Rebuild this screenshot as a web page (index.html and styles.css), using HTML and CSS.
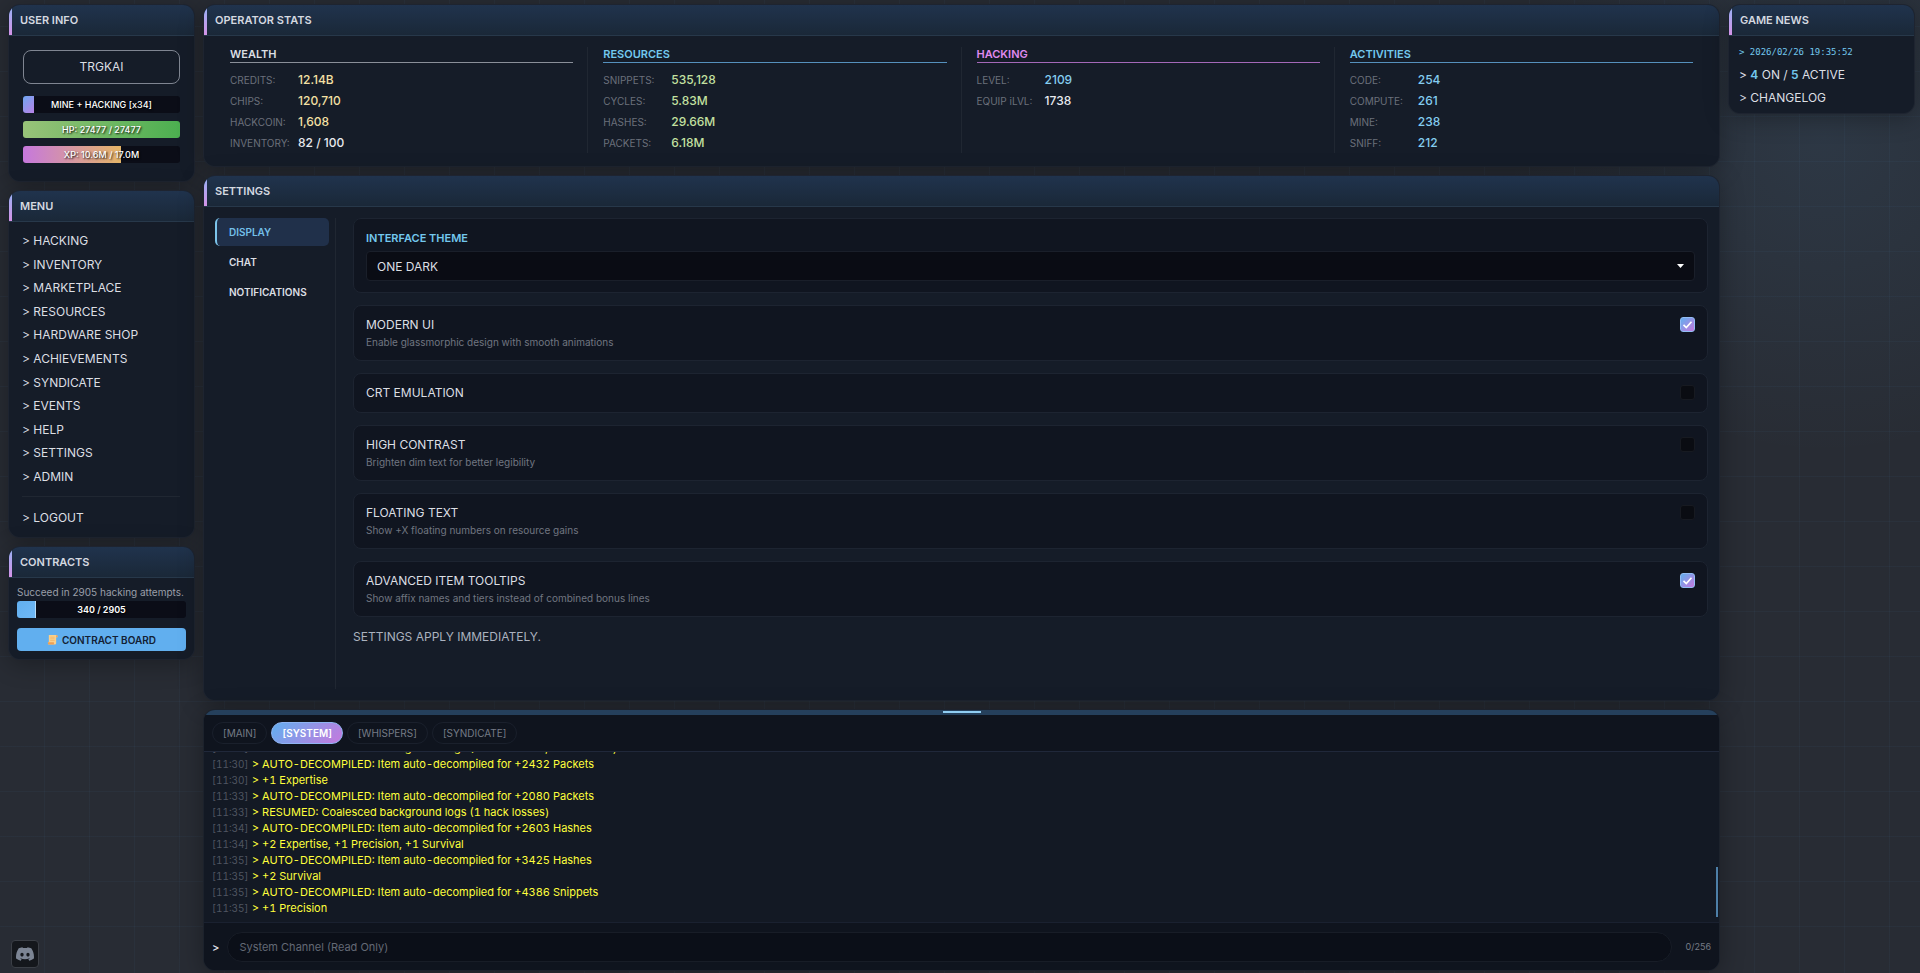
FILE: index.html
```html
<!DOCTYPE html>
<html lang="en">
<head>
<meta charset="utf-8">
<title>Operator Settings</title>
<link rel="stylesheet" href="styles.css">
</head>
<body>
<div class="layout">
  <aside class="side">
    <section class="panel">
      <h2 class="panel-title">USER INFO</h2>
      <div class="user">
        <a class="user-name" href="#profile">TRGKAI</a>
        <div class="bar"><div class="bar-fill fill-task" style="width:7%"></div><span class="bar-text">MINE + HACKING [x34]</span></div>
        <div class="bar"><div class="bar-fill fill-hp" style="width:100%"></div><span class="bar-text">HP: 27477 / 27477</span></div>
        <div class="bar"><div class="bar-fill fill-xp" style="width:62.4%"></div><span class="bar-text">XP: 10.6M / 17.0M</span></div>
      </div>
    </section>
    <section class="panel">
      <h2 class="panel-title">MENU</h2>
      <nav class="menu">
        <div class="menu-list">
          <a href="#hacking">&gt; HACKING</a>
          <a href="#inventory">&gt; INVENTORY</a>
          <a href="#marketplace">&gt; MARKETPLACE</a>
          <a href="#resources">&gt; RESOURCES</a>
          <a href="#hardware">&gt; HARDWARE SHOP</a>
          <a href="#achievements">&gt; ACHIEVEMENTS</a>
          <a href="#syndicate">&gt; SYNDICATE</a>
          <a href="#events">&gt; EVENTS</a>
          <a href="#help">&gt; HELP</a>
          <a href="#settings">&gt; SETTINGS</a>
          <a href="#admin">&gt; ADMIN</a>
        </div>
        <hr class="menu-rule">
        <a href="#logout">&gt; LOGOUT</a>
      </nav>
    </section>
    <section class="panel">
      <h2 class="panel-title">CONTRACTS</h2>
      <div class="contract">
        <p class="contract-text">Succeed in 2905 hacking attempts.</p>
        <div class="bar"><div class="bar-fill fill-contract" style="width:11.2%"></div><span class="bar-text">340 / 2905</span></div>
        <button class="contract-button" type="button">
          <svg class="scroll-icon" viewBox="0 0 12 12" aria-hidden="true"><path d="M2 1h8c1 0 1.500.6 1.500 1.500v1H10v6.300c0 1-.6 1.700-1.500 1.700H2.500C1.500 11.500 1 10.800 1 10V9h1z" fill="#fbd08a"/><path d="M3.500 3.500h4.800M3.500 5.300h4.800M3.500 7.100h4.800" stroke="#f0b468" stroke-width=".8"/><path d="M1 9h6.500v1.200c0 .8.400 1.300 1 1.300h-6C1.500 11.500 1 10.800 1 10zM10 3.500V2.300C10 1.500 10.300 1 10.700 1c.6.200.8.700.8 1.500v1z" fill="#ee9f54"/></svg>
          CONTRACT BOARD
        </button>
      </div>
    </section>
  </aside>

  <main class="center">
    <section class="panel">
      <h2 class="panel-title">OPERATOR STATS</h2>
      <div class="stats">
        <div class="stat-group">
          <h3 class="stat-title">WEALTH</h3>
          <dl class="stat-list gold">
            <dt>CREDITS:</dt><dd>12.14B</dd>
            <dt>CHIPS:</dt><dd>120,710</dd>
            <dt>HACKCOIN:</dt><dd>1,608</dd>
            <dt>INVENTORY:</dt><dd class="plain">82 / 100</dd>
          </dl>
        </div>
        <div class="stat-group">
          <h3 class="stat-title title-cyan">RESOURCES</h3>
          <dl class="stat-list green">
            <dt>SNIPPETS:</dt><dd>535,128</dd>
            <dt>CYCLES:</dt><dd>5.83M</dd>
            <dt>HASHES:</dt><dd>29.66M</dd>
            <dt>PACKETS:</dt><dd>6.18M</dd>
          </dl>
        </div>
        <div class="stat-group">
          <h3 class="stat-title title-pink">HACKING</h3>
          <dl class="stat-list cyan">
            <dt>LEVEL:</dt><dd>2109</dd>
            <dt>EQUIP iLVL:</dt><dd class="plain">1738</dd>
          </dl>
        </div>
        <div class="stat-group">
          <h3 class="stat-title title-cyan">ACTIVITIES</h3>
          <dl class="stat-list cyan">
            <dt>CODE:</dt><dd>254</dd>
            <dt>COMPUTE:</dt><dd>261</dd>
            <dt>MINE:</dt><dd>238</dd>
            <dt>SNIFF:</dt><dd>212</dd>
          </dl>
        </div>
      </div>
    </section>

    <section class="panel settings-panel">
      <h2 class="panel-title">SETTINGS</h2>
      <div class="settings">
        <div class="tabs">
          <button class="tab active" type="button">DISPLAY</button>
          <button class="tab" type="button">CHAT</button>
          <button class="tab" type="button">NOTIFICATIONS</button>
        </div>
        <form class="options">
          <div class="option theme">
            <label class="theme-label" for="theme">INTERFACE THEME</label>
            <select class="theme-select" id="theme"><option>ONE DARK</option></select>
          </div>
          <div class="option">
            <label class="option-label" for="modern"><span class="option-name">MODERN UI</span><span class="option-note">Enable glassmorphic design with smooth animations</span></label>
            <input class="check" id="modern" type="checkbox" checked>
          </div>
          <div class="option">
            <label class="option-label" for="crt"><span class="option-name">CRT EMULATION</span></label>
            <input class="check" id="crt" type="checkbox">
          </div>
          <div class="option">
            <label class="option-label" for="contrast"><span class="option-name">HIGH CONTRAST</span><span class="option-note">Brighten dim text for better legibility</span></label>
            <input class="check" id="contrast" type="checkbox">
          </div>
          <div class="option">
            <label class="option-label" for="floating"><span class="option-name">FLOATING TEXT</span><span class="option-note">Show +X floating numbers on resource gains</span></label>
            <input class="check" id="floating" type="checkbox">
          </div>
          <div class="option">
            <label class="option-label" for="tooltips"><span class="option-name">ADVANCED ITEM TOOLTIPS</span><span class="option-note">Show affix names and tiers instead of combined bonus lines</span></label>
            <input class="check" id="tooltips" type="checkbox" checked>
          </div>
          <p class="apply-note">SETTINGS APPLY IMMEDIATELY.</p>
        </form>
      </div>
    </section>

    <section class="panel chat">
      <div class="resizer"><span class="grip"></span></div>
      <div class="channels">
        <button class="channel" type="button">[MAIN]</button>
        <button class="channel selected" type="button">[SYSTEM]</button>
        <button class="channel" type="button">[WHISPERS]</button>
        <button class="channel" type="button">[SYNDICATE]</button>
      </div>
      <div class="log">
        <p><time>[11:30]</time>&gt; RESUMED: Coalesced background logs (1 hack losses, 1 hack wins)</p>
        <p><time>[11:30]</time>&gt; AUTO-DECOMPILED: Item auto-decompiled for +2432 Packets</p>
        <p><time>[11:30]</time>&gt; +1 Expertise</p>
        <p><time>[11:33]</time>&gt; AUTO-DECOMPILED: Item auto-decompiled for +2080 Packets</p>
        <p><time>[11:33]</time>&gt; RESUMED: Coalesced background logs (1 hack losses)</p>
        <p><time>[11:34]</time>&gt; AUTO-DECOMPILED: Item auto-decompiled for +2603 Hashes</p>
        <p><time>[11:34]</time>&gt; +2 Expertise, +1 Precision, +1 Survival</p>
        <p><time>[11:35]</time>&gt; AUTO-DECOMPILED: Item auto-decompiled for +3425 Hashes</p>
        <p><time>[11:35]</time>&gt; +2 Survival</p>
        <p><time>[11:35]</time>&gt; AUTO-DECOMPILED: Item auto-decompiled for +4386 Snippets</p>
        <p><time>[11:35]</time>&gt; +1 Precision</p>
        <span class="scroll-thumb"></span>
      </div>
      <div class="compose">
        <label class="prompt" for="message">&gt;</label>
        <input class="message" id="message" type="text" placeholder="System Channel (Read Only)" readonly>
        <span class="count">0/256</span>
      </div>
    </section>
  </main>

  <aside class="side">
    <section class="panel">
      <h2 class="panel-title">GAME NEWS</h2>
      <div class="news">
        <p class="clock">&gt; 2026/02/26 19:35:52</p>
        <p>&gt; <b>4</b> ON / <b>5</b> ACTIVE</p>
        <a href="#changelog">&gt; CHANGELOG</a>
      </div>
    </section>
  </aside>
</div>
<a class="discord" href="#discord" aria-label="Discord">
  <svg viewBox="0 0 24 24" aria-hidden="true"><path fill="currentColor" d="M20.317 4.37a19.79 19.79 0 0 0-4.885-1.515.074.074 0 0 0-.079.037c-.21.375-.444.864-.608 1.25a18.27 18.27 0 0 0-5.487 0 12.64 12.64 0 0 0-.617-1.25.077.077 0 0 0-.079-.037A19.736 19.736 0 0 0 3.677 4.37a.07.07 0 0 0-.032.027C.533 9.046-.32 13.58.099 18.057a.082.082 0 0 0 .031.057 19.9 19.9 0 0 0 5.993 3.03.078.078 0 0 0 .084-.028 14.09 14.09 0 0 0 1.226-1.994.076.076 0 0 0-.041-.106 13.107 13.107 0 0 1-1.872-.892.077.077 0 0 1-.008-.128 10.2 10.2 0 0 0 .372-.292.074.074 0 0 1 .077-.01c3.928 1.793 8.18 1.793 12.062 0a.074.074 0 0 1 .078.01c.12.098.246.198.373.292a.077.077 0 0 1-.006.127 12.299 12.299 0 0 1-1.873.892.077.077 0 0 0-.041.107c.36.698.772 1.362 1.225 1.993a.076.076 0 0 0 .084.028 19.839 19.839 0 0 0 6.002-3.03.077.077 0 0 0 .032-.054c.5-5.177-.838-9.674-3.549-13.66a.061.061 0 0 0-.031-.03zM8.02 15.33c-1.183 0-2.157-1.085-2.157-2.419 0-1.333.956-2.419 2.157-2.419 1.21 0 2.176 1.096 2.157 2.42 0 1.333-.956 2.418-2.157 2.418zm7.975 0c-1.183 0-2.157-1.085-2.157-2.419 0-1.333.955-2.419 2.157-2.419 1.21 0 2.176 1.096 2.157 2.42 0 1.333-.946 2.418-2.157 2.418z"/></svg>
</a>
</body>
</html>
```

FILE: styles.css
```css
:root {
  --text: #dcdfe4;
  --line: rgba(255, 255, 255, 0.05);
  --blue: #61afef;
  --cyan: #73c8ee;
}

* { box-sizing: border-box; }

body {
  margin: 0;
  height: 100vh;
  overflow: hidden;
  color: var(--text);
  font: 12px/20px Inter, sans-serif;
  background:
    radial-gradient(circle at 95% 14%, rgba(97, 175, 239, 0.09), transparent 320px),
    repeating-linear-gradient(0deg, transparent 0 44px, rgba(97, 175, 239, 0.04) 44px 45px) 0 -2px,
    repeating-linear-gradient(90deg, transparent 0 44px, rgba(97, 175, 239, 0.04) 44px 45px),
    #282c34;
}

h2, h3, p, dl, dd { margin: 0; }
a { color: inherit; text-decoration: none; }
button, input, select { font-family: inherit; color: inherit; }

.layout {
  display: grid;
  grid-template-columns: 187px minmax(0, 1fr) 187px;
  gap: 8px;
  height: 100vh;
  padding: 4px 5px 2px 8px;
}

.side, .center {
  display: flex;
  flex-direction: column;
  gap: 8px;
  min-height: 0;
}

.panel {
  position: relative;
  flex-shrink: 0;
  overflow: hidden;
  border: 1px solid rgba(255, 255, 255, 0.04);
  border-radius: 12px;
  background: #151c28;
  box-shadow: 0 4px 24px rgba(0, 0, 0, 0.3);
}

.panel-title {
  padding: 5px 11px 5px 8px;
  border-left: 3px solid;
  border-image: linear-gradient(#93b4f5, #d692e6) 1;
  border-bottom: 0;
  box-shadow: 0 1px 0 #27384a;
  background: linear-gradient(#20334d, #1a2838);
  color: #d5d9e0;
  font-size: 11px;
  font-weight: 600;
  line-height: 20px;
}

/* user info */
.user {
  display: flex;
  flex-direction: column;
  gap: 8px;
  padding: 15px 14px 18px;
}
.user-name {
  margin-bottom: 4px;
  padding: 7px;
  border: 1px solid #7f8591;
  border-radius: 8px;
  line-height: 18px;
  text-align: center;
}
.bar {
  position: relative;
  height: 17px;
  overflow: hidden;
  border-radius: 3px;
  background: #0b0d17;
}
.bar-fill { height: 100%; }
.fill-task { background: linear-gradient(135deg, #6fa8f2, #b982e6); }
.fill-hp { background: linear-gradient(90deg, #98c379, #4caf50); }
.fill-xp { background: linear-gradient(90deg, #c678dd, #e5b567); }
.fill-contract { background: linear-gradient(135deg, #61afef, #6fb8f5); border-right: 1px solid #b5dcfa; }
.bar-text {
  position: absolute;
  inset: 0;
  color: #fff;
  font-size: 9px;
  font-weight: 500;
  line-height: 17px;
  text-align: center;
  text-shadow: 1px 1px 2px #000;
}
.contract .bar-text { font-weight: 600; }

/* menu */
.menu {
  display: flex;
  flex-direction: column;
  padding: 10px 14px 9px 13px;
}
.menu-list {
  display: flex;
  flex-direction: column;
  justify-content: space-between;
  height: 256px;
}
.menu-rule {
  width: 100%;
  margin: 9px 0 11px;
  border: 0;
  border-top: 1px solid var(--line);
}

/* contracts */
.contract { padding: 6px 8px 8px; }
.contract-text { color: #9a9fa8; font-size: 10px; line-height: 18px; }
.contract-button {
  display: flex;
  align-items: center;
  justify-content: center;
  gap: 4px;
  width: 100%;
  height: 23px;
  margin-top: 10px;
  padding: 0;
  border: 0;
  border-radius: 4px;
  background: var(--blue);
  color: #122033;
  font-size: 10px;
  font-weight: 600;
}
.scroll-icon { width: 11px; height: 11px; }

/* operator stats */
.stats {
  display: grid;
  grid-template-columns: repeat(4, 1fr);
  padding: 12px 11px 13px;
}
.stat-group {
  padding: 0 14px 0 15px;
  border-right: 1px solid var(--line);
}
.stat-group:last-child { border-right: 0; padding-right: 15px; }
.stat-title {
  border-bottom: 1px solid #8a8f99;
  font-size: 11px;
  font-weight: 600;
  line-height: 15px;
}
.title-cyan { color: var(--cyan); border-color: #5590bd; }
.title-pink { color: #e08af0; border-color: #a468b8; }
.stat-list {
  display: grid;
  grid-template-columns: 68px 1fr;
  grid-auto-rows: 21px;
  align-items: center;
  padding-top: 6px;
}
.stat-list dt { color: #6b707b; font-size: 10px; }
.stat-list dd { font-size: 12px; font-weight: 500; }
.gold { color: #f4e0a4; }
.green { color: #c3e0a0; }
.cyan { color: #84cdf0; }
.stat-list .plain { color: #e8eaee; }

/* settings */
.settings-panel {
  display: flex;
  flex: 1 1 auto;
  flex-direction: column;
  min-height: 0;
}
.settings {
  display: grid;
  flex: 1;
  grid-template-columns: 121px minmax(0, 1fr);
  gap: 17px;
  min-height: 0;
  padding: 12px 11px 11px;
}
.tabs {
  display: flex;
  flex-direction: column;
  gap: 2px;
  padding-right: 6px;
  border-right: 1px solid var(--line);
}
.tab {
  height: 28px;
  padding: 0 12px;
  border: 0;
  border-left: 2px solid transparent;
  border-radius: 5px;
  background: none;
  font-size: 10px;
  font-weight: 600;
  text-align: left;
}
.tab.active {
  border-left-color: #7cc4ea;
  background: #20304a;
  color: #73bfe8;
}
.options {
  display: flex;
  flex-direction: column;
  gap: 12px;
}
.option {
  display: flex;
  align-items: flex-start;
  justify-content: space-between;
  padding: 11px 12px;
  border: 1px solid #1d2431;
  border-radius: 8px;
  background: #101520;
}
.theme { flex-direction: column; }
.theme-label {
  padding-bottom: 5px;
  color: var(--cyan);
  font-size: 11px;
  font-weight: 600;
  line-height: 16px;
}
.theme-select {
  width: 100%;
  height: 30px;
  padding: 0 10px;
  appearance: none;
  border: 1px solid #1a1f2a;
  border-radius: 4px;
  background: #0a0c14 url("data:image/svg+xml,%3Csvg xmlns='http://www.w3.org/2000/svg' viewBox='0 0 7 4'%3E%3Cpath d='M0 0h7L3.500 4z' fill='%23fff'/%3E%3C/svg%3E") no-repeat right 10px center / 7px 4px;
  font-size: 12px;
}
.option-label { display: grid; }
.option-name { font-size: 12px; line-height: 16px; }
.option-note { padding-top: 2px; color: #707580; font-size: 10px; line-height: 14px; }
.check {
  width: 15px;
  height: 15px;
  margin: 0;
  appearance: none;
  border: 1px solid #171a21;
  border-radius: 3px;
  background: #0a0c12;
}
.check:checked {
  border-color: #93bdf5;
  background:
    url("data:image/svg+xml,%3Csvg xmlns='http://www.w3.org/2000/svg' viewBox='0 0 13 13'%3E%3Cpath d='M2.500 6.800l2.800 2.700 5.200-5.800' fill='none' stroke='%23fff' stroke-width='1.600'/%3E%3C/svg%3E") center / 13px 13px,
    linear-gradient(135deg, #61afef, #c678dd);
}
.apply-note { color: #abb2bf; font-size: 12px; line-height: 16px; }

/* chat */
.chat {
  display: flex;
  flex-direction: column;
  height: 262px;
  background: #131924;
}
.resizer {
  display: flex;
  justify-content: center;
  height: 5px;
  flex-shrink: 0;
  padding-top: 1px;
  background: #25405c;
}
.grip { width: 38px; height: 2px; background: #8fcdf2; }
.channels {
  display: flex;
  flex-shrink: 0;
  gap: 4px;
  padding: 7px 8px;
  border-bottom: 1px solid #20283a;
  background: #0f141e;
}
.channel {
  height: 22px;
  padding: 0 10px;
  border: 1px solid #1a202c;
  border-radius: 11px;
  background: none;
  color: #757b86;
  font-size: 10px;
}
.channel.selected {
  border-color: #8fb4f2;
  background: linear-gradient(135deg, #61afef, #c678dd);
  color: #fff;
  font-weight: 600;
}
.log {
  position: relative;
  display: flex;
  flex: 1;
  flex-direction: column;
  justify-content: flex-end;
  min-height: 0;
  overflow: hidden;
  padding: 0 8px 6px;
  color: #ffff3c;
  font-size: 11px;
  font-variant-numeric: tabular-nums;
  line-height: 16px;
}
.log p { flex-shrink: 0; }
.log time {
  display: inline-block;
  width: 40px;
  color: #4f5561;
  font-size: 10px;
}
.scroll-thumb {
  position: absolute;
  right: 1px;
  bottom: 5px;
  width: 2px;
  height: 50px;
  background: #4d7fa8;
}
.compose {
  display: flex;
  flex-shrink: 0;
  align-items: center;
  gap: 8px;
  padding: 9px 8px 8px;
  border-top: 1px solid #1a2130;
  background: #0f141e;
}
.prompt { font-weight: 600; font-size: 11px; }
.message {
  flex: 1;
  min-width: 0;
  height: 30px;
  padding: 0 11px;
  margin-right: 6px;
  border: 1px solid #181d27;
  border-radius: 15px;
  background: #0b0f18;
  font-size: 11px;
}
.message::placeholder { color: #636975; opacity: 1; }
.count { color: #757b86; font-size: 9px; }

/* game news */
.news {
  display: flex;
  flex-direction: column;
  gap: 3px;
  padding: 7px 10px 5px;
}
.clock {
  color: var(--cyan);
  font-family: "DejaVu Sans Mono", monospace;
  font-size: 9px;
}
.news b { color: var(--cyan); font-weight: 600; }

.discord {
  position: fixed;
  left: 11px;
  bottom: 5px;
  display: grid;
  place-items: center;
  width: 28px;
  height: 28px;
  border: 1px solid #3b3f46;
  border-radius: 4px;
  background: #14171c;
  color: #7c8594;
}
.discord svg { width: 18px; height: 18px; }
```
